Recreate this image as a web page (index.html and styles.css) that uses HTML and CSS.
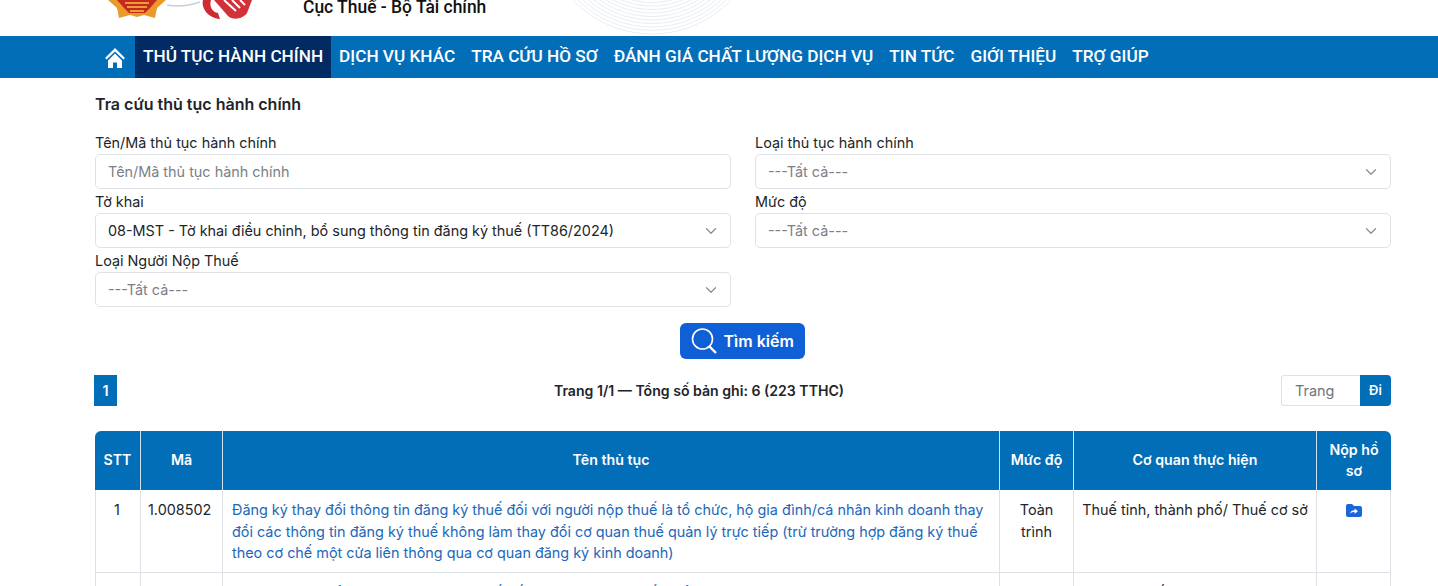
FILE: index.html
```html
<!DOCTYPE html>
<html lang="vi">
<head>
    <meta charset="UTF-8">
    <meta name="viewport" content="width=device-width, initial-scale=1.0">
    <title>Tra cứu thủ tục hành chính</title>
    <link rel="stylesheet" href="styles.css">
</head>
<body>

    <header class="top">
        <div class="logos">
            <svg width="60" height="19" viewBox="0 0 60 19">
                <path d="M1 0 L10 8 L12 18 L23 15 L30 17 L37 15 L48 18 L50 8 L59 0 Z" fill="#ea9a2a"/>
                <path d="M10 0 L17 8 L22 13 H38 L43 8 L50 0 Z" fill="#c6281f"/>
                <path d="M18 3 H42 M20 7 H40 M23 11 H37" stroke="#f2c53d" stroke-width="1.6" fill="none"/>
            </svg>
            <svg class="logo-line" width="33" height="6" viewBox="0 0 33 6">
                <path d="M0 4 Q16 7 33 1" stroke="#c7d0da" stroke-width="1.5" fill="none"/>
            </svg>
            <svg width="54" height="20" viewBox="0 0 54 20">
                <path d="M3 0 C1 8 8 18 20 19 L18 13 C12 12 9 6 11 0 Z" fill="#cf2a33"/>
                <path d="M14 0 L28 16 C32 20 42 20 47 13 L52 0 Z" fill="#d2313a"/>
                <path d="M24 0 L36 11 M32 0 L40 8 M40 0 L45 5" stroke="#fff" stroke-width="2" fill="none"/>
            </svg>
        </div>
        <div class="agency">Cục Thuế - Bộ Tài chính</div>
        <svg class="rings" width="165" height="36" viewBox="0 0 165 36">
            <g fill="none" stroke="#e9eef4" stroke-width="1">
                <circle cx="82" cy="-75" r="109"/>
                <circle cx="82" cy="-75" r="105.5"/>
                <circle cx="82" cy="-75" r="102"/>
                <circle cx="82" cy="-75" r="98.5"/>
                <circle cx="82" cy="-75" r="95"/>
                <circle cx="82" cy="-75" r="91.5"/>
                <circle cx="82" cy="-75" r="88"/>
                <circle cx="82" cy="-75" r="84.5"/>
                <circle cx="82" cy="-75" r="81"/>
                <circle cx="82" cy="-75" r="77.5"/>
            </g>
        </svg>
    </header>

    <nav class="menu">
        <a class="menu-home" href="#">
            <svg width="22" height="22" viewBox="0 0 22 22">
                <path d="M11 1 L1 11 L2.6 12.6 L11 4.4 L19.4 12.6 L21 11 Z" fill="#fff"/>
                <path d="M4 13.4 L11 6.6 L18 13.4 V21 H13 V15.5 H9 V21 H4 Z" fill="#fff"/>
            </svg>
        </a>
        <a class="menu-item active" href="#">THỦ TỤC HÀNH CHÍNH</a>
        <a class="menu-item" href="#">DỊCH VỤ KHÁC</a>
        <a class="menu-item" href="#">TRA CỨU HỒ SƠ</a>
        <a class="menu-item" href="#">ĐÁNH GIÁ CHẤT LƯỢNG DỊCH VỤ</a>
        <a class="menu-item" href="#">TIN TỨC</a>
        <a class="menu-item" href="#">GIỚI THIỆU</a>
        <a class="menu-item" href="#">TRỢ GIÚP</a>
    </nav>

    <main class="content">
        <h2 class="title">Tra cứu thủ tục hành chính</h2>

        <div class="form">
            <div class="field">
                <label>Tên/Mã thủ tục hành chính</label>
                <div class="control placeholder">Tên/Mã thủ tục hành chính</div>
            </div>
            <div class="field">
                <label>Loại thủ tục hành chính</label>
                <div class="control placeholder select">---Tất cả---</div>
            </div>
            <div class="field">
                <label>Tờ khai</label>
                <div class="control select">08-MST - Tờ khai điều chỉnh, bổ sung thông tin đăng ký thuế (TT86/2024)</div>
            </div>
            <div class="field">
                <label>Mức độ</label>
                <div class="control placeholder select">---Tất cả---</div>
            </div>
            <div class="field">
                <label>Loại Người Nộp Thuế</label>
                <div class="control placeholder select">---Tất cả---</div>
            </div>
        </div>

        <div class="search-row">
            <button class="search-btn">
                <svg width="28" height="28" viewBox="0 0 28 28" fill="none" stroke="#fff">
                    <circle cx="12.5" cy="12" r="10" stroke-width="1.6"/>
                    <path d="M19.5 19.5 L26 26" stroke-width="2.4"/>
                </svg>
                Tìm kiếm
            </button>
        </div>

        <div class="pager">
            <span class="page-num">1</span>
            <span class="page-info">Trang 1/1 — Tổng số bản ghi: 6 (223 TTHC)</span>
            <div class="page-go">
                <span class="page-input">Trang</span>
                <span class="page-btn">Đi</span>
            </div>
        </div>

        <table class="result">
            <thead>
                <tr>
                    <th class="c-stt">STT</th>
                    <th class="c-ma">Mã</th>
                    <th>Tên thủ tục</th>
                    <th class="c-muc">Mức độ</th>
                    <th class="c-cq">Cơ quan thực hiện</th>
                    <th class="c-nop">Nộp hồ sơ</th>
                </tr>
            </thead>
            <tbody>
                <tr>
                    <td class="center">1</td>
                    <td class="code">1.008502</td>
                    <td class="name"><a href="#">Đăng ký thay đổi thông tin đăng ký thuế đối với người nộp thuế là tổ chức, hộ gia đình/cá nhân kinh doanh thay đổi các thông tin đăng ký thuế không làm thay đổi cơ quan thuế quản lý trực tiếp (trừ trường hợp đăng ký thuế theo cơ chế một cửa liên thông qua cơ quan đăng ký kinh doanh)</a></td>
                    <td class="center">Toàn trình</td>
                    <td class="center">Thuế tỉnh, thành phố/ Thuế cơ sở</td>
                    <td class="center">
                        <svg class="folder" width="16" height="13" viewBox="0 0 16 13">
                            <path d="M0 2 Q0 0 2 0 H6 L8 2 H14 Q16 2 16 4 V11 Q16 13 14 13 H2 Q0 13 0 11 Z" fill="#1b65dc"/>
                            <path d="M4 9.5 Q5 6.4 8.6 6.3 V4.6 L12 7.2 L8.6 9.8 V8.1 Q6 8 4 9.5 Z" fill="#fff"/>
                        </svg>
                    </td>
                </tr>
                <tr>
                    <td class="center">2</td>
                    <td class="code">1.007665</td>
                    <td class="name"><a href="#">Đăng ký thay đổi thông tin đăng ký thuế đối với người nộp thuế là tổ chức, hộ gia đình</a></td>
                    <td class="center">Toàn trình</td>
                    <td class="center">Thuế cơ sở quản lý</td>
                    <td class="center"></td>
                </tr>
            </tbody>
        </table>
    </main>

</body>
</html>
```

FILE: styles.css
```css
html, body {
    margin: 0;
    padding: 0;
    height: 100%;
    overflow: hidden;
}

body {
    font-family: Inter, "Noto Sans", sans-serif;
    font-size: 14.4px;
    color: #212529;
    background: #fff;
}

.top {
    height: 36px;
    display: flex;
    align-items: flex-start;
    padding-left: 107px;
    overflow: hidden;
}

.logos {
    display: flex;
    align-items: flex-start;
    width: 196px;
    height: 36px;
}

.logo-line {
    margin-top: 1px;
}

.agency {
    font-family: Roboto, sans-serif;
    font-weight: 500;
    font-size: 17.45px;
    line-height: 16px;
    color: #111;
    margin-top: -1px;
    width: 267px;
}

.menu {
    height: 42px;
    background: #036eb8;
    display: flex;
    padding-left: 104px;
}

.menu-home {
    width: 23px;
    padding-right: 8px;
    display: flex;
    align-items: center;
}

.menu-home svg {
    margin-top: 2px;
}

.menu-item {
    display: flex;
    align-items: center;
    padding: 0 8px 2px;
    font-family: Roboto, sans-serif;
    font-weight: 500;
    font-size: 17.2px;
    color: #fff;
    text-decoration: none;
    white-space: nowrap;
}

.menu-item.active {
    background: #032b63;
}

.content {
    padding: 0 47px 0 95px;
}

.title {
    margin: 17px 0 20px;
    font-size: 16px;
    line-height: 19px;
    font-weight: 600;
    color: #212529;
}

.form {
    display: grid;
    grid-template-columns: 636px 636px;
    column-gap: 24px;
}

.field label {
    display: block;
    line-height: 18px;
    color: #212529;
}

.field {
    margin-bottom: 4px;
}

.control {
    box-sizing: border-box;
    height: 35px;
    margin-top: 2px;
    padding: 0 12px;
    border: 1px solid #dee2e6;
    border-radius: 5px;
    line-height: 33px;
    color: #212529;
    white-space: nowrap;
}

.placeholder {
    color: #7b8087;
}

.select {
    background-image: url("data:image/svg+xml,%3Csvg xmlns='http://www.w3.org/2000/svg' viewBox='0 0 16 16'%3E%3Cpath fill='none' stroke='%23868e96' stroke-linecap='round' stroke-linejoin='round' stroke-width='1.6' d='m2 5 6 6 6-6'/%3E%3C/svg%3E");
    background-repeat: no-repeat;
    background-position: right 12px center;
    background-size: 14px 12px;
}

.search-row {
    display: flex;
    justify-content: center;
    margin-top: 12px;
    padding-right: 2px;
}

.search-btn {
    box-sizing: border-box;
    width: 125px;
    height: 36px;
    display: flex;
    align-items: center;
    gap: 6px;
    padding: 0 0 0 10px;
    border: none;
    border-radius: 6px;
    background: #0f5fd7;
    color: #fff;
    font-family: Inter, sans-serif;
    font-size: 16px;
    font-weight: 600;
}

.pager {
    display: flex;
    align-items: center;
    justify-content: space-between;
    margin-top: 16px;
    height: 31px;
}

.page-num {
    width: 23px;
    margin-left: -1px;
    line-height: 31px;
    text-align: center;
    background: #036eb8;
    color: #fff;
    font-weight: 600;
}

.page-info {
    font-weight: 600;
    font-size: 14.1px;
    color: #212529;
}

.page-go {
    display: flex;
    width: 110px;
    height: 31px;
}

.page-input {
    box-sizing: border-box;
    width: 79px;
    padding-left: 13px;
    border: 1px solid #dee2e6;
    border-right: none;
    border-radius: 3px 0 0 3px;
    line-height: 30px;
    color: #6c757d;
}

.page-btn {
    width: 31px;
    line-height: 31px;
    text-align: center;
    font-size: 13px;
    font-weight: 600;
    color: #fff;
    background: #036eb8;
    border-radius: 0 4px 4px 0;
}

.result {
    margin-top: 25px;
    width: 1296px;
    table-layout: fixed;
    border-collapse: separate;
    border-spacing: 0;
}

.result th {
    height: 59px;
    padding: 0 8px 2px;
    box-sizing: border-box;
    background: #036eb8;
    color: #fff;
    font-size: 14.2px;
    font-weight: 600;
    line-height: 21px;
    text-align: center;
    border-right: 1px solid #cfe0ee;
}

.result th:first-child {
    border-top-left-radius: 6px;
}

.result th:last-child {
    border-top-right-radius: 6px;
    border-right: none;
}

.result td {
    padding: 9px 8px 8px;
    line-height: 21.5px;
    vertical-align: top;
    border-right: 1px solid #dee2e6;
    border-bottom: 1px solid #dee2e6;
}

.result td:first-child {
    border-left: 1px solid #dee2e6;
    padding-right: 9px;
    padding-left: 7px;
}

.result td.name {
    padding-left: 9px;
}

.result td.code {
    padding-left: 7px;
    padding-right: 0;
}

.result a {
    color: #1b68bb;
    text-decoration: none;
}

.center {
    text-align: center;
}

.c-stt { width: 46px; }
.c-ma { width: 82px; }
.c-muc { width: 74px; }
.c-cq { width: 243px; }
.c-nop { width: 74px; }

.folder {
    margin-top: 5px;
    display: block;
    margin-left: auto;
    margin-right: auto;
}
```
